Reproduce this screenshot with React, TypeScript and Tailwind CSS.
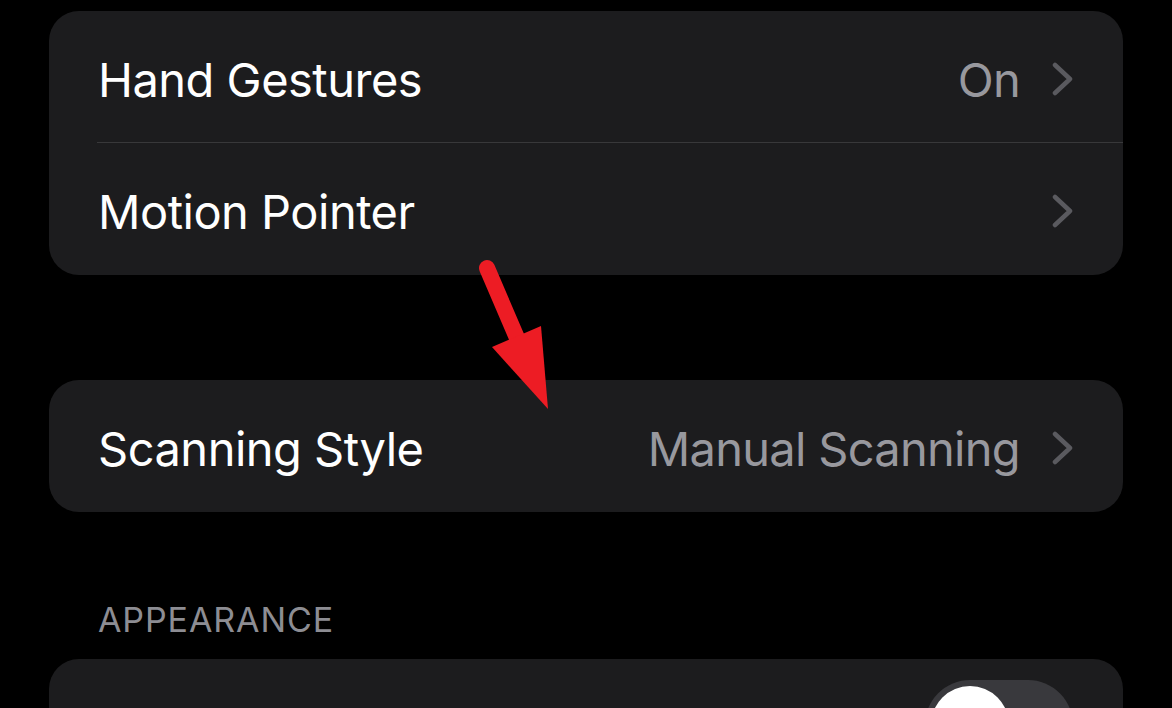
import React from "react";

type Row = {
  label: string;
  value?: string;
};

function Chevron() {
  return (
    <svg width="22" height="34" viewBox="0 0 22 34" className="shrink-0">
      <path
        d="M3 3 L18 17 L3 31"
        fill="none"
        stroke="#5a5a5f"
        strokeWidth="4.5"
        strokeLinecap="round"
        strokeLinejoin="round"
      />
    </svg>
  );
}

function SettingRow(props: Row & { divider?: boolean }) {
  return (
    <div className="relative flex items-center h-[132px] pl-[49px] pr-[49px] pt-[4px]">
      <p className="text-white text-[47px] leading-none tracking-[-0.5px]">{props.label}</p>
      <div className="ml-auto flex items-center gap-[32px]">
        {props.value && (
          <p className="text-[#98989e] text-[47px] leading-none tracking-[-0.7px]">{props.value}</p>
        )}
        <Chevron />
      </div>
      {props.divider && (
        <div className="absolute bottom-0 left-[48px] right-0 h-px bg-[#38383a]" />
      )}
    </div>
  );
}

export default function App() {
  return (
    <div
      className="relative w-[1172px] h-[708px] bg-black overflow-hidden px-[49px] pt-[11px]"
      style={{ fontFamily: "Inter, 'Noto Sans', sans-serif" }}
    >
      <div className="bg-[#1c1c1e] rounded-[30px] overflow-hidden">
        <SettingRow label="Hand Gestures" value="On" divider />
        <SettingRow label="Motion Pointer" />
      </div>

      <div className="bg-[#1c1c1e] rounded-[30px] overflow-hidden mt-[105px]">
        <SettingRow label="Scanning Style" value="Manual Scanning" />
      </div>

      <p className="text-[#8d8d93] text-[34px] leading-none pl-[49px] mt-[91px] tracking-[0.9px]">
        APPEARANCE
      </p>

      <div className="bg-[#1c1c1e] rounded-[30px] overflow-hidden mt-[22px] h-[131px] flex items-center pr-[50px]">
        <div className="ml-auto w-[148px] h-[90px] rounded-full bg-[#39393d] p-[6px] flex items-center">
          <div className="w-[78px] h-[78px] rounded-full bg-white" />
        </div>
      </div>

      <svg
        className="absolute inset-0 pointer-events-none"
        width="1172"
        height="708"
        viewBox="0 0 1172 708"
      >
        <line
          x1="487"
          y1="268"
          x2="517"
          y2="338"
          stroke="#ed1c24"
          strokeWidth="16"
          strokeLinecap="round"
        />
        <polygon points="492,347 541,326 548,409" fill="#ed1c24" />
      </svg>
    </div>
  );
}
